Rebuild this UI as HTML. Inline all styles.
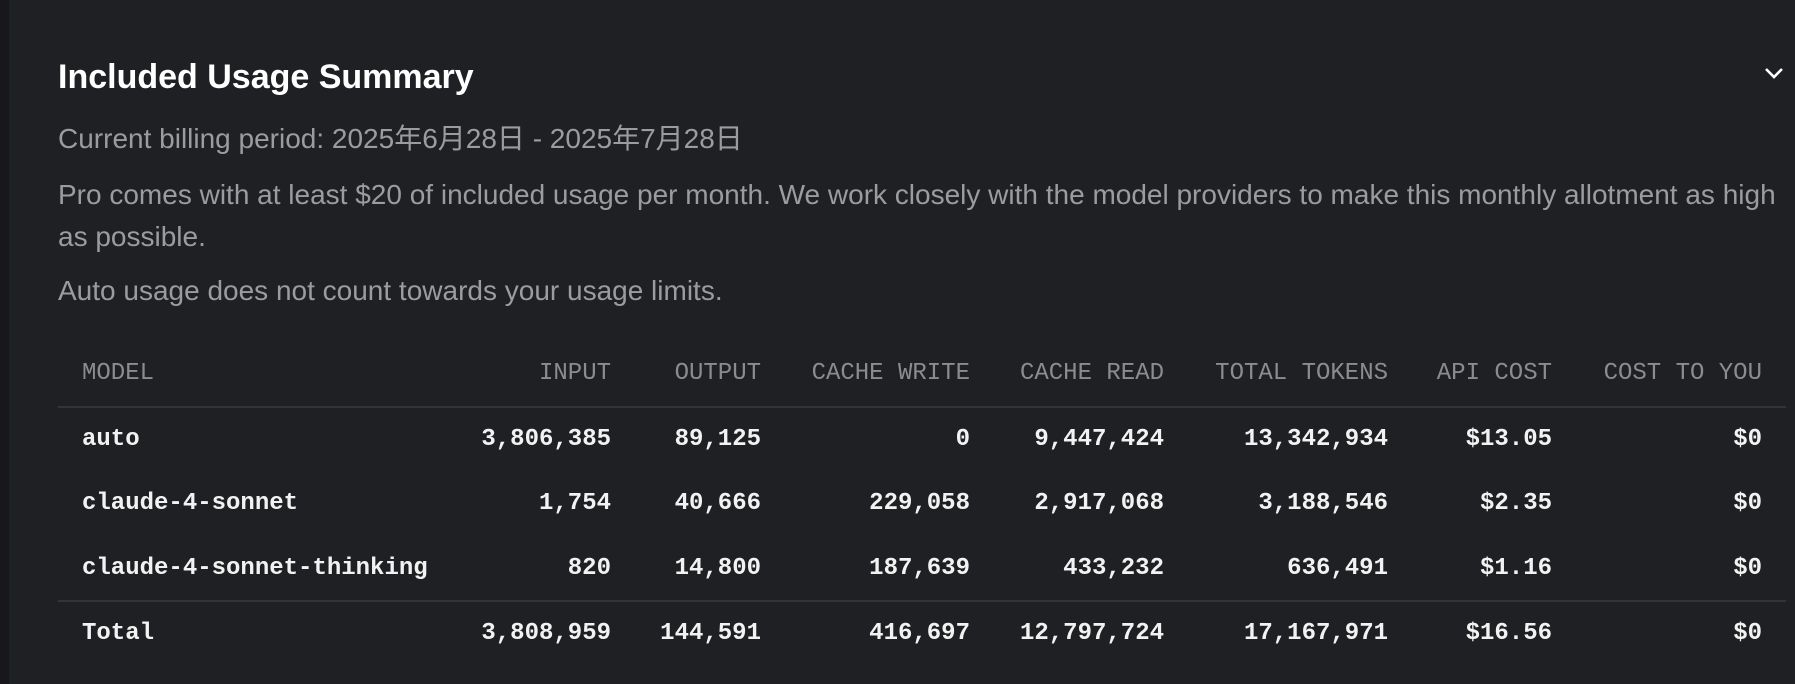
<!DOCTYPE html>
<html><head><meta charset="utf-8"><style>
html,body{margin:0;padding:0;}
body{width:1795px;height:684px;background:#1f2023;position:relative;overflow:hidden;font-family:"Liberation Sans","Noto Sans CJK SC",sans-serif;}
.strip{position:absolute;left:0;top:0;width:9px;height:684px;background:#18181a;}
h1{position:absolute;left:58px;top:57px;margin:0;font-size:34px;font-weight:bold;color:#fff;line-height:40px;white-space:nowrap;}
.p{position:absolute;left:58px;font-size:28px;color:#9c9ca0;white-space:nowrap;line-height:32px;}
.m{position:absolute;font-family:"Liberation Mono",monospace;font-size:24px;line-height:28px;white-space:nowrap;}
.h{color:#8c8c90;}
.v{color:#f2f2f2;font-weight:bold;}
.line{position:absolute;left:58px;width:1728px;height:2px;background:#333438;}
</style></head><body>
<div class="strip"></div>
<h1>Included Usage Summary</h1>
<svg style="position:absolute;left:1763px;top:65px" width="22" height="16" viewBox="0 0 22 16"><path d="M3 4 L11 12 L19 4" stroke="#fff" stroke-width="2.6" fill="none"/></svg>
<div class="p" style="top:123px">Current billing period: 2025年6月28日 - 2025年7月28日</div>
<div class="p" style="top:179px">Pro comes with at least $20 of included usage per month. We work closely with the model providers to make this monthly allotment as high</div>
<div class="p" style="top:221px">as possible.</div>
<div class="p" style="top:275px">Auto usage does not count towards your usage limits.</div>

<div class="line" style="top:406px"></div>
<div class="line" style="top:600px"></div>

<div id="tbl"></div>
<script>
const rights=[611,761,970,1164,1388,1552,1762];
const rows=[
 {y:360,cls:'h',d:['MODEL','INPUT','OUTPUT','CACHE WRITE','CACHE READ','TOTAL TOKENS','API COST','COST TO YOU']},
 {y:426,cls:'v',d:['auto','3,806,385','89,125','0','9,447,424','13,342,934','$13.05','$0']},
 {y:490,cls:'v',d:['claude-4-sonnet','1,754','40,666','229,058','2,917,068','3,188,546','$2.35','$0']},
 {y:555,cls:'v',d:['claude-4-sonnet-thinking','820','14,800','187,639','433,232','636,491','$1.16','$0']},
 {y:620,cls:'v',d:['Total','3,808,959','144,591','416,697','12,797,724','17,167,971','$16.56','$0']}
];
let h='';
rows.forEach(r=>{
 h+=`<div class="m ${r.cls}" style="left:82px;top:${r.y}px">${r.d[0]}</div>`;
 for(let i=1;i<8;i++){h+=`<div class="m ${r.cls}" style="right:${1795-rights[i-1]}px;top:${r.y}px">${r.d[i]}</div>`;}
});
document.getElementById('tbl').innerHTML=h;
</script>
</body></html>
